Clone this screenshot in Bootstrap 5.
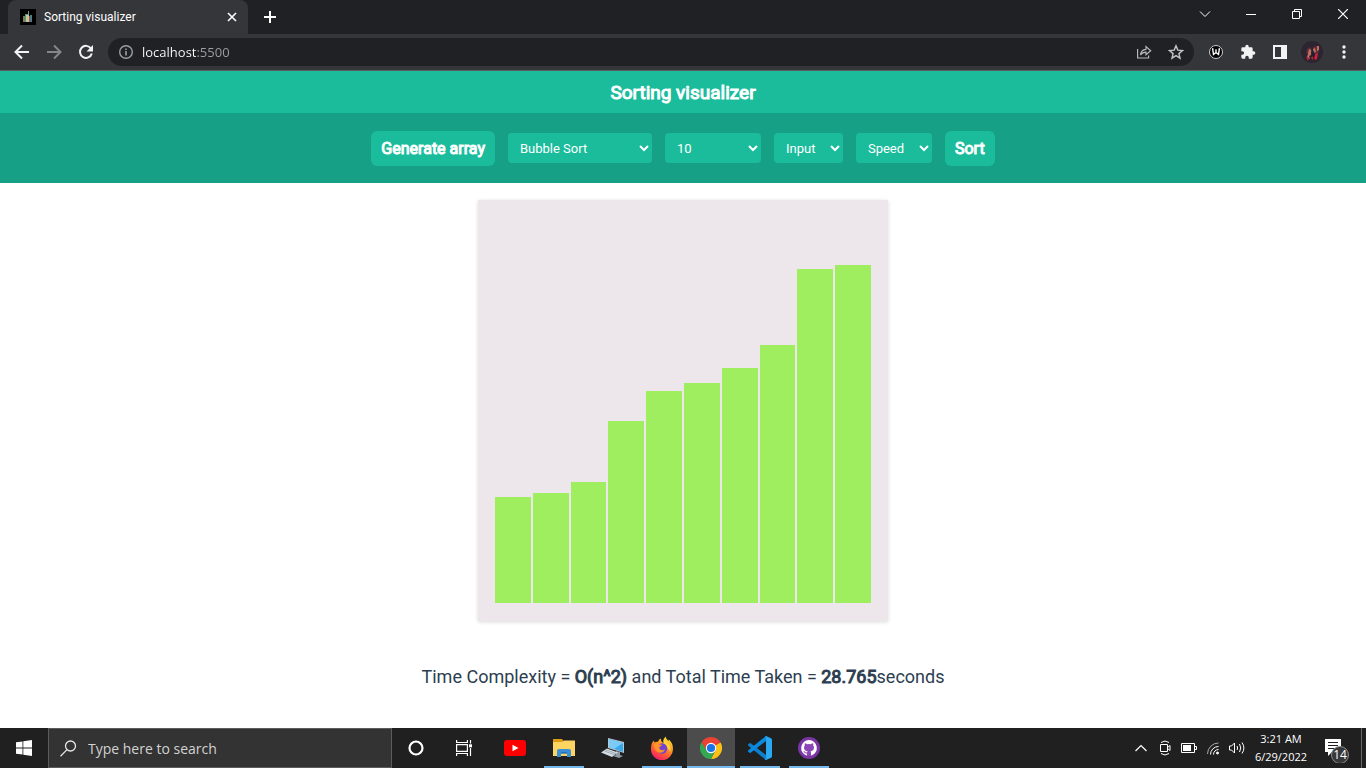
<!DOCTYPE html>
<html lang="en">
<head>
<meta charset="utf-8">
<meta name="viewport" content="width=device-width, initial-scale=1">
<title>Sorting visualizer</title>
<link href="https://cdn.jsdelivr.net/npm/bootstrap@5.3.0/dist/css/bootstrap.min.css" rel="stylesheet">
<style>
  :root { --teal: #1abc9c; --teal-dark: #16a085; --frame: #202124; --tool: #35363a; --os: #202020; }
  body { font-family: Roboto, sans-serif; color: #2c3e50; background: #fff; }
  svg { display: block; flex: none; }
  .shell-text { font-family: "Open Sans", "Noto Sans", sans-serif; }
  .plain-btn { background: none; border: 0; padding: 0; color: #fff; display: flex; align-items: center; justify-content: center; flex: none; }

  /* Browser frame */
  .tab-strip { background: var(--frame); height: 34px; padding-left: 8px; }
  .page-tab { background: var(--tool); width: 240px; border-radius: 8px 8px 0 0; padding: 0 8px 0 12px; gap: 8px; font-family: Roboto, sans-serif; font-size: 12px; color: #fff; }
  .page-tab .plain-btn { width: 16px; height: 16px; }
  .new-tab { width: 28px; margin-left: 8px; }
  .win-btn { width: 46px; height: 28px; }
  .tool-row { background: var(--tool); height: 37px; padding: 0 8px; gap: 4px; border-bottom: 1px solid #5b5c60; }
  .tool-btn { width: 28px; height: 28px; }
  .omnibox { background: var(--frame); height: 28px; border-radius: 14px; margin: 0 4px; padding: 0 4px 0 10px; gap: 4px; color: #9aa0a6; }
  .url-field { border: 0; outline: 0; padding: 0 0 0 4px; min-width: 0; height: 28px; font-size: 13px; line-height: 28px;
    background: linear-gradient(90deg, #fff 58px, #9aa0a6 58px); -webkit-background-clip: text; background-clip: text; color: transparent; }

  /* Sorting page */
  .synth-bold { font-weight: 400; -webkit-text-stroke: 1px currentColor; }
  .title-bar { background: var(--teal); color: #fff; height: 42px; padding-top: 1px; }
  .title-bar h1 { font-size: 19px; line-height: 24px; }
  .control-bar { background: var(--teal-dark); min-height: 70px; gap: 13px; }
  .teal-btn, .teal-btn:hover { background: var(--teal); color: #fff; border: 0; border-radius: 6px; padding: 0 10px; height: 35px; font-size: 16px; line-height: 35px; }
  .teal-select { background: var(--teal); color: #fff; border: 0; border-radius: 4px; height: 30px; padding: 0 0 0 8px; font-size: 13px; }
  .w-algo { width: 144px; } .w-size { width: 96px; } .w-input { width: 69px; } .w-speed { width: 76px; }
  .chart-box { width: 410px; height: 421px; margin-top: 17px; padding: 16px 16px 18px; background: #ede6ea; box-shadow: 0 1px 4px rgba(0,0,0,.15); }
  .chart-bar { background: #9eee5f; margin: 0 1px; flex: 1 1 0; }
  .result-line { font-size: 18px; line-height: 24px; margin-top: 44px; }

  /* Taskbar */
  .task-bar { background: var(--os); height: 40px; color: #fff; }
  .start-btn { width: 48px; }
  .search-box { width: 344px; background: #333; border: 1px solid #5c5c5c; padding: 0 11px; gap: 11px; }
  .search-box input { background: none; border: 0; outline: 0; padding: 0; color: #fff; font-size: 14px; min-width: 0; }
  .search-box input::placeholder { color: #d2d2d2; opacity: 1; }
  .app-list { gap: 1px; margin-left: 1px; }
  .app-btn { width: 48px; }
  .app-open { background: linear-gradient(#76b9ed, #76b9ed) center bottom / 40px 2px no-repeat; }
  .app-active { background: linear-gradient(#76b9ed, #76b9ed) center bottom / 48px 2px no-repeat #4c4c4c; }
  .tray-btn { width: 24px; }
  .clock-btn { width: 64px; font-size: 11px; line-height: 18px; }
  .note-btn { width: 48px; }
  .desk-edge { width: 5px; border-left: 1px solid #6a6a6a; }
</style>
</head>
<body class="d-flex flex-column min-vh-100">

<header class="shell-text">
  <div class="tab-strip d-flex align-items-stretch">
    <div class="page-tab d-flex align-items-center">
      <svg width="16" height="16" viewBox="0 0 16 16"><path fill="#000" d="M0 0h16v16H0z"/><path fill="#7f7850" d="M3 7h3v6H3z"/><path fill="#4f9b6e" d="M5 5h3v8H5z"/><path fill="#7895a0" d="M8 2h1v5H8z"/><path fill="#c2c49c" d="M6 6h3v7H6z"/><path fill="#a04f42" d="M9 7h1v6H9z"/><path fill="#497d8d" d="M10 6h2v7h-2z"/></svg>
      <span class="flex-grow-1">Sorting visualizer</span>
      <button class="plain-btn" type="button" aria-label="Close tab"><svg width="10" height="10" viewBox="0 0 10 10" stroke="#fff" stroke-width="1.6"><path d="M1 1l8 8M9 1L1 9"/></svg></button>
    </div>
    <button class="plain-btn new-tab" type="button" aria-label="New tab"><svg width="12" height="12" viewBox="0 0 12 12" stroke="#fff" stroke-width="2"><path d="M6 0v12M0 6h12"/></svg></button>
    <div class="d-flex ms-auto">
      <button class="plain-btn win-btn" type="button" aria-label="Search tabs"><svg width="12" height="12" viewBox="0 0 12 12" fill="none" stroke="#fff"><path d="M1 3.500l5 5 5-5"/></svg></button>
      <button class="plain-btn win-btn" type="button" aria-label="Minimize"><svg width="10" height="10" viewBox="0 0 10 10"><path fill="#fff" d="M0 5h10v1H0z"/></svg></button>
      <button class="plain-btn win-btn" type="button" aria-label="Restore"><svg width="10" height="10" viewBox="0 0 10 10" fill="none" stroke="#fff"><path d="M.5 2.500h7v7h-7zM2.500 2.500v-2h7v7h-2"/></svg></button>
      <button class="plain-btn win-btn" type="button" aria-label="Close window"><svg width="10" height="10" viewBox="0 0 10 10" stroke="#fff" stroke-width="1.2"><path d="M0 0l10 10M10 0L0 10"/></svg></button>
    </div>
  </div>

  <div class="tool-row d-flex align-items-center">
    <button class="plain-btn tool-btn" type="button" aria-label="Back"><svg width="16" height="16" viewBox="0 0 16 16" fill="none" stroke="#f1f3f4" stroke-width="2"><path d="M15 8H2.500M8 1.500L1.500 8 8 14.500"/></svg></button>
    <button class="plain-btn tool-btn" type="button" aria-label="Forward"><svg width="16" height="16" viewBox="0 0 16 16" fill="none" stroke="#85868a" stroke-width="2"><path d="M1 8h12.500M8 1.500L14.500 8 8 14.500"/></svg></button>
    <button class="plain-btn tool-btn" type="button" aria-label="Reload"><svg width="16" height="16" viewBox="0 0 16 16"><path d="M13 4.500A6 6 0 1 0 13.800 9.500" fill="none" stroke="#f1f3f4" stroke-width="2"/><path d="M15 1v6.500H8.500z" fill="#f1f3f4"/></svg></button>
    <div class="omnibox d-flex align-items-center flex-grow-1">
      <svg width="16" height="16" viewBox="0 0 16 16"><circle cx="8" cy="8" r="6.300" fill="none" stroke="#9aa0a6" stroke-width="1.400"/><path fill="#9aa0a6" d="M7.200 7h1.600v4.500H7.200zM7.200 4.500h1.600V6H7.200z"/></svg>
      <input class="url-field flex-grow-1" type="text" value="localhost:5500" aria-label="Address">
      <button class="plain-btn tool-btn" type="button" aria-label="Share"><svg width="16" height="16" viewBox="0 0 16 16" fill="none" stroke="#b4b7ba" stroke-width="1.200"><path d="M1.600 5v9h11v-2.500M4.500 11C4.800 7.500 7 5.500 10 5.300V2.500l4.700 4.300-4.700 4V8.200C7.500 8.200 5.800 9 4.500 11z"/></svg></button>
      <button class="plain-btn tool-btn" type="button" aria-label="Bookmark"><svg width="16" height="16" viewBox="0 0 16 16" fill="none" stroke="#c4c7ca" stroke-width="1.400"><path d="M8 1.800l1.800 4.300 4.700.4-3.600 3.100 1.100 4.600-4-2.500-4 2.500 1.100-4.600-3.600-3.100 4.700-.4z"/></svg></button>
    </div>
    <button class="plain-btn tool-btn" type="button" aria-label="Extension"><svg width="16" height="16" viewBox="0 0 16 16"><circle cx="8" cy="8" r="6.500" fill="#000" stroke="#ccc"/><path d="M4 5h1.500M10.500 5H12M4.700 5l.8 5.500L8 8.500l2.500 2L11.300 5M8 5.300v3.500" fill="none" stroke="#fff" stroke-width="1.400"/></svg></button>
    <button class="plain-btn tool-btn" type="button" aria-label="Extensions"><svg width="16" height="16" viewBox="0 0 24 24"><path fill="#f1f3f4" d="M20.500 11H19V7a2 2 0 0 0-2-2h-4V3.500a2.500 2.500 0 0 0-5 0V5H4a2 2 0 0 0-2 2v3.800h1.500a2.700 2.700 0 0 1 0 5.400H2V20a2 2 0 0 0 2 2h3.800v-1.500a2.700 2.700 0 0 1 5.400 0V22H17a2 2 0 0 0 2-2v-4h1.500a2.500 2.500 0 0 0 0-5z"/></svg></button>
    <button class="plain-btn tool-btn" type="button" aria-label="Side panel"><svg width="14" height="14" viewBox="0 0 14 14"><path fill="#f1f3f4" fill-rule="evenodd" d="M0 0h14v14H0zM2 2v10h6V2z"/></svg></button>
    <button class="plain-btn tool-btn" type="button" aria-label="Profile"><svg width="22" height="22" viewBox="0 0 22 22"><circle cx="11" cy="11" r="11" fill="#2c2431"/><path fill="#5d2f3c" d="M6 8l3-2 2 3-2 5-4-2zM12 6l4-1 2 5-2 4-3-2z"/><path fill="#c3715f" d="M8 8l2 1v5l-2 1 1 3-3-2 1-3zM16 5h2v4l-2 1zM12 8l2-1 1 4-2 1z"/><path fill="#d62034" d="M5 16l3 1-1 3zM14 13l3-1-1 6-2 1-1-3zM10 17l2-2v4z"/><path fill="#15233b" d="M11 12l2-2 1 5-2 2z"/></svg></button>
    <button class="plain-btn tool-btn" type="button" aria-label="Menu"><svg width="4" height="14" viewBox="0 0 4 14" fill="#f1f3f4"><circle cx="2" cy="2" r="1.700"/><circle cx="2" cy="7" r="1.700"/><circle cx="2" cy="12" r="1.700"/></svg></button>
  </div>
</header>

<main class="flex-grow-1 d-flex flex-column">
  <div class="title-bar d-flex align-items-center justify-content-center">
    <h1 class="synth-bold m-0">Sorting visualizer</h1>
  </div>
  <div class="control-bar d-flex flex-wrap align-items-center justify-content-center">
    <button class="btn teal-btn synth-bold" type="button">Generate array</button>
    <select class="teal-select w-algo" aria-label="Algorithm"><option>Bubble Sort</option><option>Selection Sort</option><option>Insertion Sort</option><option>Merge Sort</option><option>Quick Sort</option></select>
    <select class="teal-select w-size" aria-label="Array size"><option>10</option><option>20</option><option>30</option></select>
    <select class="teal-select w-input" aria-label="Input order"><option>Input</option></select>
    <select class="teal-select w-speed" aria-label="Speed"><option>Speed</option></select>
    <button class="btn teal-btn synth-bold" type="button">Sort</button>
  </div>
  <div class="chart-box mx-auto d-flex align-items-end">
    <div class="chart-bar" style="height:106px"></div>
    <div class="chart-bar" style="height:110px"></div>
    <div class="chart-bar" style="height:121px"></div>
    <div class="chart-bar" style="height:182px"></div>
    <div class="chart-bar" style="height:212px"></div>
    <div class="chart-bar" style="height:220px"></div>
    <div class="chart-bar" style="height:235px"></div>
    <div class="chart-bar" style="height:258px"></div>
    <div class="chart-bar" style="height:334px"></div>
    <div class="chart-bar" style="height:338px"></div>
  </div>
  <p class="result-line text-center mb-0">Time Complexity = <span class="synth-bold">O(n^2)</span> and Total Time Taken = <span class="synth-bold">28.765</span>seconds</p>
</main>

<footer class="task-bar shell-text d-flex align-items-stretch">
  <button class="plain-btn start-btn" type="button" aria-label="Start"><svg width="16" height="16" viewBox="0 0 16 16" fill="#fff"><path d="M0 2.300l6.500-.9v6.200H0zM7.300 1.200L16 0v7.600H7.300zM0 8.400h6.500v6.200L0 13.700zM7.300 8.400H16V16l-8.700-1.200z"/></svg></button>
  <label class="search-box d-flex align-items-center">
    <svg width="17" height="17" viewBox="0 0 17 17" fill="none" stroke="#e6e6e6" stroke-width="1.300"><circle cx="10.500" cy="6" r="5"/><path d="M7 9.600L.5 16.300"/></svg>
    <input class="flex-grow-1" type="text" placeholder="Type here to search" aria-label="Type here to search">
  </label>
  <div class="app-list d-flex align-items-stretch">
    <button class="plain-btn app-btn" type="button" aria-label="Cortana"><svg width="18" height="18" viewBox="0 0 18 18"><circle cx="8" cy="9" r="6.500" fill="none" stroke="#fff" stroke-width="2.200"/></svg></button>
    <button class="plain-btn app-btn" type="button" aria-label="Task view"><svg width="20" height="16" viewBox="0 0 20 16" fill="none" stroke="#fff" stroke-width="1.200"><path d="M.6 0v2.500h10.800V0M.6 16v-2.500h10.800V16M.6 4.600h10.800v6.800H.6zM14.500 0v3.500M14.500 8v8"/><path fill="#fff" stroke="none" d="M13 4.300h3v3h-3z"/></svg></button>
    <button class="plain-btn app-btn" type="button" aria-label="YouTube"><svg width="22" height="16" viewBox="0 0 22 16"><rect width="22" height="16" rx="3" fill="#f00"/><path fill="#fff" d="M8.500 4.800v6.400l6-3.200z"/></svg></button>
    <button class="plain-btn app-btn app-open" type="button" aria-label="File Explorer"><svg width="22" height="18" viewBox="0 0 22 18"><path fill="#e09a14" d="M0 0h9l1.500 2v3H0z"/><path fill="#fcd462" d="M0 3h9l2-1.500h11V17H0z"/><path fill="#3a8fd6" d="M4 18v-6q0-2 2-2h10q2 0 2 2v6h-4v-3.500H8V18z"/><path fill="#2a70b5" d="M8 14.500h6V13H8z"/></svg></button>
    <button class="plain-btn app-btn" type="button" aria-label="Remote computer"><svg width="24" height="22" viewBox="0 0 24 22"><path fill="#b9c5cf" d="M7 1l16 4v11L7 11z"/><path fill="#38a8ec" d="M8 2l14 4v9L8 10z"/><path fill="#7acbf8" d="M8 2l14 4-9 6-5-2z"/><path fill="#8e9ba6" d="M15 14l4 1v3l3 1-4 2-6-2 3-1z"/><path fill="#d5dde3" d="M6 11.500l11 4-6 4.500-11-4.500z"/><path stroke="#8796a1" stroke-width=".7" d="M3.500 14l10.500 4M5 12.800l10.500 4"/></svg></button>
    <button class="plain-btn app-btn app-open" type="button" aria-label="Firefox"><svg width="24" height="24" viewBox="0 0 24 24"><defs><linearGradient id="ffBody" x1=".8" y1="0" x2=".3" y2="1"><stop offset="0" stop-color="#ffe83b"/><stop offset=".4" stop-color="#ff9a22"/><stop offset=".75" stop-color="#ff4a3d"/><stop offset="1" stop-color="#e81d75"/></linearGradient></defs><path fill="url(#ffBody)" d="M2 7q1-2 2-2.500.1 1.500.5 2Q6 5.500 8 5.700q1-2.700 3-3.200-.5 2 1 3.500l1.500 1Q13 3 15.500.5 16 3 18.500 5l.3-1.500Q23 7 23 13A11 11 0 0 1 1 13.500Q.8 9.500 2 7z"/><circle cx="12" cy="12.500" r="5.200" fill="#7242d2"/><path fill="#ff9327" d="M4 8q3-1.200 5 .5l3 .2q.2 1.300-2.500 2.100-.8 1.500.6 2.700 2.100 1.500 5-.3-1.500 4-6 3.500Q4 15.500 4 8z"/><path fill="#ffd43d" d="M14 2.500q1 3 4.500 5.500 3 3.500 1.500 8.500-.2-3-2-4-1-3.500-4-5.500-1-2 0-4.500z"/></svg></button>
    <button class="plain-btn app-btn app-active" type="button" aria-label="Chrome"><svg width="22" height="22" viewBox="0 0 22 22"><path fill="#ea4335" d="M11 11L1.470 5.500a11 11 0 0 1 19.060 0z"/><path fill="#fbc116" d="M11 11l9.530-5.500A11 11 0 0 1 11 22l4.330-8.500z"/><path fill="#34a853" d="M11 11l4.330 2.500L11 22A11 11 0 0 1 1.470 5.500l5.200 8z"/><path fill="#ea4335" d="M11 6h9.800l-.27-.5L11 5zM1.470 5.500L6.700 13.500 7 8z"/><path fill="#34a853" d="M1.470 5.500l5.200 8.500 1 1.500-6-8z"/><circle cx="11" cy="11" r="5.200" fill="#fff"/><circle cx="11" cy="11" r="4.100" fill="#1a73e8"/></svg></button>
    <button class="plain-btn app-btn app-open" type="button" aria-label="Visual Studio Code"><svg width="24" height="24" viewBox="0 0 24 24"><path fill="#0d7fce" d="M0 8.500L1.500 7.200q.6-.4 1.200 0L18 19v5L.3 9.700q-.6-.6-.3-1.200z"/><path fill="#0a8be0" d="M0 15.500l1.500 1.300q.6.400 1.200 0L18 5V0L.3 14.300q-.6.600-.3 1.200z"/><path fill="#2aa8f2" d="M18 0l5 2.300q1 .5 1 1.500v16.400q0 1-1 1.500L18 24q-.8 0-1.300-.6Q18 23.600 18 22V2Q18 .4 16.700.6 17.200 0 18 0z"/></svg></button>
    <button class="plain-btn app-btn app-open" type="button" aria-label="GitHub Desktop"><svg width="22" height="22" viewBox="0 0 22 22"><circle cx="11" cy="11" r="11" fill="#7a35a3"/><circle cx="11" cy="11" r="8" fill="#8c46b5"/><path fill="#fff" d="M11 3a8 8 0 0 0-2.600 15.500c.5.100.6-.2.600-.5v-1.600c-2 .4-2.700-.9-2.900-1.400-.2-.4-.5-.8-.9-1 .8-.3 1.400.2 1.700.7.600 1 1.500.9 2.200.6.100-.5.300-.8.500-1-2-.3-3.600-1-3.600-3.700 0-.9.300-1.500.8-2.100-.2-.7-.2-1.500.1-2.200.8 0 1.500.4 2.200.9a7 7 0 0 1 3.800 0c.7-.5 1.400-.9 2.200-.9.300.7.300 1.500.1 2.200.5.600.8 1.200.8 2.100 0 2.700-1.700 3.400-3.600 3.700.3.300.6.800.6 1.500V18c0 .3.100.6.600.5A8 8 0 0 0 11 3z"/></svg></button>
  </div>
  <div class="d-flex align-items-stretch ms-auto">
    <button class="plain-btn tray-btn" type="button" aria-label="Show hidden icons"><svg width="12" height="8" viewBox="0 0 12 8" fill="none" stroke="#fff" stroke-width="1.200"><path d="M.5 7L6 1.500 11.500 7"/></svg></button>
    <button class="plain-btn tray-btn" type="button" aria-label="Meet now"><svg width="12" height="16" viewBox="0 0 12 16" fill="none" stroke="#fff"><path d="M1.500 4.500h7v7h-7zM8.500 7.500l2.500-2v5l-2.500-2M2 2.500Q6-.5 10 2.500M2 13.500q4 3 8 0"/></svg></button>
    <button class="plain-btn tray-btn" type="button" aria-label="Battery"><svg width="16" height="10" viewBox="0 0 16 10"><path fill="none" stroke="#fff" d="M.5.500h13v9H.5zM13.500 3.500h2v3h-2"/><path fill="#fff" d="M2 2h8v6H2z"/></svg></button>
    <button class="plain-btn tray-btn" type="button" aria-label="Network"><svg width="14" height="14" viewBox="0 0 14 14" fill="none" stroke="#fff"><path stroke="#aaa" d="M1.500 13A11 11 0 0 1 12.500 2"/><path d="M4.500 13.500a8 8 0 0 1 8-8M7.500 13.500a5 5 0 0 1 5-5"/><circle cx="11.500" cy="12" r="1" fill="#fff"/></svg></button>
    <button class="plain-btn tray-btn" type="button" aria-label="Volume"><svg width="17" height="14" viewBox="0 0 17 14" fill="none" stroke="#fff"><path d="M.5 5h2l3-3v10l-3-3h-2zM8 5q1.300 2 0 4M10.500 3q2.500 4 0 8M13 1.500q3.800 5.500 0 11"/></svg></button>
    <button class="plain-btn clock-btn flex-column" type="button"><span>3:21 AM</span><span>6/29/2022</span></button>
    <button class="plain-btn note-btn" type="button" aria-label="14 notifications"><svg width="28" height="30" viewBox="0 0 28 30"><path fill="#fff" d="M2 6h16v13H9l-4 4v-4H2z"/><path stroke="#202020" d="M5 9.500h10M5 12.500h10M5 15.500h7"/><circle cx="17" cy="22" r="8.500" fill="#38383a" stroke="#8a8a8a"/><text x="17" y="26" text-anchor="middle" fill="#fff" font-size="12">14</text></svg></button>
    <div class="desk-edge"></div>
  </div>
</footer>

<script src="https://cdn.jsdelivr.net/npm/bootstrap@5.3.0/dist/js/bootstrap.bundle.min.js"></script>
</body>
</html>
